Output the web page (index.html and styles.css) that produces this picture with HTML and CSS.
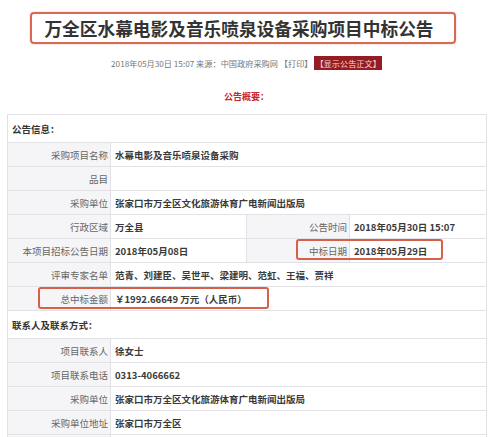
FILE: index.html
```html
<!DOCTYPE html>
<html lang="zh-CN">
<head>
  <meta charset="UTF-8">
  <title>万全区水幕电影及音乐喷泉设备采购项目中标公告</title>
  <link rel="stylesheet" href="styles.css">
</head>
<body>
  <div class="page">
    <div class="title-box">
      <h1>万全区水幕电影及音乐喷泉设备采购项目中标公告</h1>
    </div>

    <p class="meta">2018年05月30日 15:07 来源：中国政府采购网 【打印】 <span class="show-text">【显示公告正文】</span></p>

    <p class="summary">公告概要：</p>

    <div class="notice">
      <table class="info">
        <colgroup>
          <col class="c-label">
          <col class="c-value">
          <col class="c-label2">
          <col class="c-value2">
        </colgroup>
        <tr class="section"><td colspan="4">公告信息：</td></tr>
        <tr><th>采购项目名称</th><td colspan="3">水幕电影及音乐喷泉设备采购</td></tr>
        <tr><th>品目</th><td colspan="3"></td></tr>
        <tr><th>采购单位</th><td colspan="3">张家口市万全区文化旅游体育广电新闻出版局</td></tr>
        <tr><th>行政区域</th><td>万全县</td><th>公告时间</th><td>2018年05月30日 15:07</td></tr>
        <tr><th>本项目招标公告日期</th><td>2018年05月08日</td><th>中标日期</th><td>2018年05月29日</td></tr>
        <tr><th>评审专家名单</th><td colspan="3">范青、刘建臣、吴世平、梁建明、范虹、王福、贾祥</td></tr>
        <tr><th>总中标金额</th><td colspan="3">￥1992.66649 万元（人民币）</td></tr>
        <tr class="section"><td colspan="4">联系人及联系方式：</td></tr>
        <tr><th>项目联系人</th><td colspan="3">徐女士</td></tr>
        <tr><th>项目联系电话</th><td colspan="3">0313-4066662</td></tr>
        <tr><th>采购单位</th><td colspan="3">张家口市万全区文化旅游体育广电新闻出版局</td></tr>
        <tr><th>采购单位地址</th><td colspan="3">张家口市万全区</td></tr>
        <tr><th></th><td colspan="3"></td></tr>
      </table>

      <!-- red marks drawn over the table -->
      <div class="mark mark-date"></div>
      <div class="mark mark-amount"></div>
    </div>
  </div>
</body>
</html>
```

FILE: styles.css
```css
body {
  margin: 0;
  background: #fff;
  font-family: "Noto Sans CJK SC", "Noto Sans", sans-serif;
  color: #333;
}
.page {
  width: 479px;
  padding-left: 7px;
}
.title-box {
  margin: 12px 0 0 23px;
  width: 426px;
  height: 32px;
  box-sizing: border-box;
  border: 2px solid #d86a55;
  border-radius: 4px;
  box-shadow: 0 0 2px rgba(200, 90, 70, 0.4);
  display: flex;
  align-items: center;
  justify-content: center;
}
.title-box h1 {
  margin: 0;
  font-size: 17.7px;
  font-weight: bold;
  color: #333;
  position: relative;
  left: -4px;
}
.meta {
  margin: 13px 0 0;
  text-align: center;
  font-size: 8.2px;
  line-height: 12px;
  color: #777;
}
.show-text {
  background: #951c22;
  color: #f6d6d6;
  padding: 1px 1px;
}
.summary {
  margin: 22px 0 0;
  text-align: center;
  font-size: 9px;
  line-height: 12px;
  font-weight: bold;
  color: #c4262c;
}
.notice {
  position: relative;
  margin-top: 11px;
}
.info {
  width: 479px;
  table-layout: fixed;
  border-collapse: collapse;
  font-size: 9.5px;
}
.c-label { width: 103px; }
.c-value { width: 136px; }
.c-label2 { width: 103px; }
.c-value2 { width: 137px; }
.info th,
.info td {
  height: 23px;
  padding: 0 4px;
  border: 1px solid #e2e2e6;
  white-space: nowrap;
  overflow: hidden;
}
.info th {
  background: #f5f5f8;
  color: #666;
  font-weight: normal;
  text-align: right;
  padding-right: 2px;
}
.info td {
  color: #3a3a3a;
  font-weight: bold;
  text-align: left;
}
.info .section td {
  height: 27px;
  padding-left: 4px;
  color: #333;
  font-weight: bold;
}
.mark {
  position: absolute;
  box-sizing: border-box;
  border: 2px solid #d6614b;
  border-radius: 3px;
}
.mark-date {
  left: 289px;
  top: 125px;
  width: 147px;
  height: 21px;
}
.mark-amount {
  left: 31px;
  top: 173px;
  width: 231px;
  height: 22px;
}
```
